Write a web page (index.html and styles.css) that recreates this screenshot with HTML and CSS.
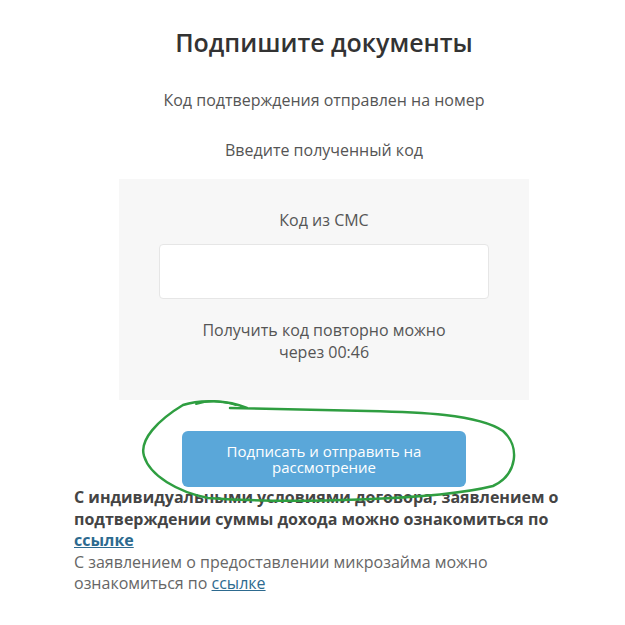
FILE: index.html
```html
<!DOCTYPE html>
<html lang="ru">
<head>
    <meta charset="UTF-8" />
    <meta name="viewport" content="width=device-width, initial-scale=1">
    <title>Подпишите документы</title>
    <link rel="stylesheet" href="styles.css">
</head>
<body>
<div class="page">
    <h1>Подпишите документы</h1>
    <p class="note note-first">Код подтверждения отправлен на номер</p>
    <p class="note">Введите полученный код</p>

    <div class="code-box">
        <label class="code-label" for="code">Код из СМС</label>
        <input type="text" id="code" class="code-input" />
        <div class="timer">Получить код повторно можно<br>через 00:46</div>
    </div>

    <div class="submit">
        <button class="submit-btn">Подписать и отправить на<br>рассмотрение</button>
        <svg class="mark" width="380" height="110" viewBox="0 0 380 110">
            <path d="M 109 12 C 90 4, 62 3, 45 9 C 20 24, 1 44, 6 60 C 12 80, 40 96, 70 102 C 150 108, 300 104, 355 90 C 380 78, 382 50, 365 35 C 340 18, 280 16, 230 15 C 180 14, 130 13, 92 12"
                  fill="none" stroke="#2f9e41" stroke-width="2.5" stroke-linecap="round" stroke-linejoin="round"/>
            <path d="M 58 8 C 70 4, 85 5, 98 9" fill="none" stroke="#2f9e41" stroke-width="2" stroke-linecap="round"/>
        </svg>
    </div>

    <p class="terms terms-bold">С индивидуальными условиями договора, заявлением о подтверждении суммы дохода можно ознакомиться по <a href="#">ссылке</a></p>
    <p class="terms">С заявлением о предоставлении микрозайма можно ознакомиться по <a href="#">ссылке</a></p>
</div>
</body>
</html>
```

FILE: styles.css
```css
body {
    margin: 0;
    padding: 26px 0 0 23px;
    font-family: "Open Sans", Arial, sans-serif;
    color: #555;
    background: #fff;
}
.page {
    width: 500px;
    margin: 0 auto;
}
h1 {
    margin: 0;
    font-size: 25px;
    line-height: 32px;
    font-weight: 600;
    color: #333;
    text-align: center;
}
.note {
    margin: 28px 0 0;
    font-size: 16px;
    line-height: 22px;
    text-align: center;
}
.note-first { margin-top: 31px; }

.code-box {
    margin: 18px 45px 0;
    padding: 30px 40px 37px;
    background: #f7f7f7;
    text-align: center;
}
.code-label {
    display: block;
    font-size: 16px;
    line-height: 22px;
}
.code-input {
    display: block;
    box-sizing: border-box;
    width: 100%;
    height: 55px;
    margin-top: 13px;
    border: 1px solid #e6e6e6;
    border-radius: 4px;
    background: #fff;
}
.timer {
    margin-top: 20px;
    font-size: 16px;
    line-height: 22px;
}

.submit {
    position: relative;
    margin-top: 31px;
    display: flex;
    justify-content: center;
}
.submit-btn {
    width: 284px;
    height: 56px;
    border: none;
    border-radius: 6px;
    background: #5aa7d9;
    color: #fff;
    font-family: inherit;
    font-size: 15px;
    line-height: 16px;
}
.mark {
    position: absolute;
    left: 64px;
    top: -35px;
    pointer-events: none;
}

.terms {
    margin: 0;
    font-size: 16px;
    line-height: 21px;
    color: #666;
}
.terms-bold {
    font-weight: 700;
    line-height: 21.5px;
    color: #444;
}
.terms a {
    color: #2d6a8f;
    text-decoration: underline;
}
```
